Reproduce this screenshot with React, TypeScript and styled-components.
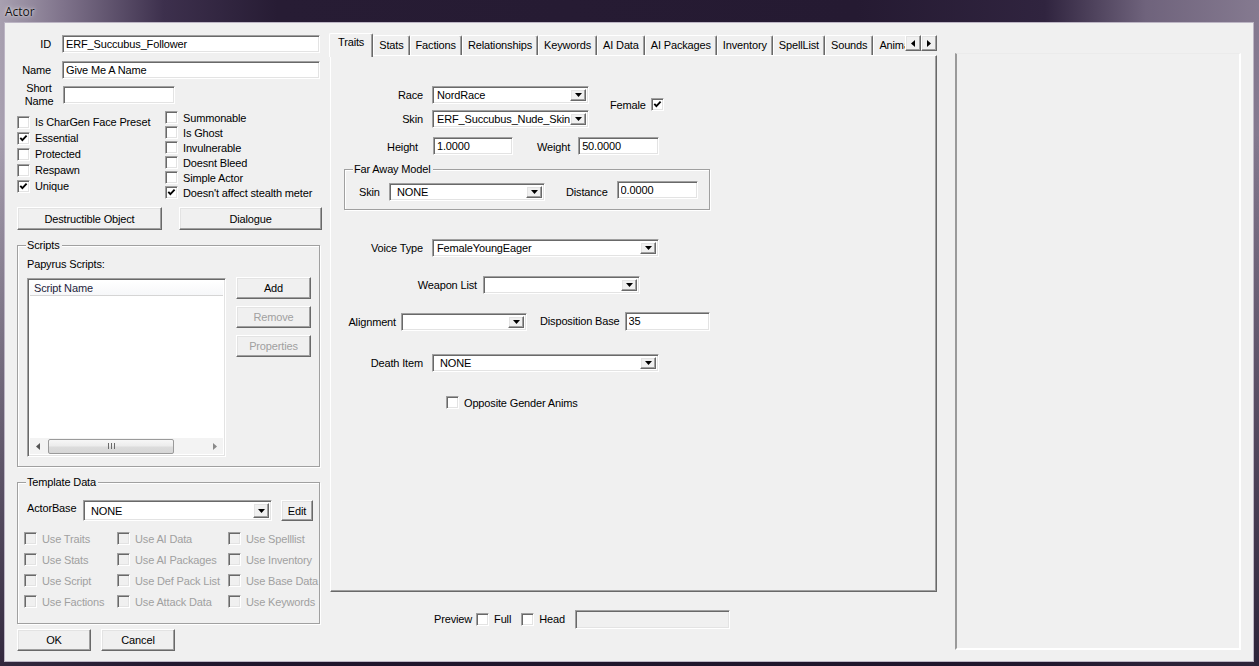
import React from "react";
import styled, { createGlobalStyle, css } from "styled-components";

const GlobalStyle = createGlobalStyle`
  html, body { margin: 0; padding: 0; background: #261b33; }
  body { font-family: "Liberation Sans", Arial, sans-serif; font-size: 11px; letter-spacing: -0.15px; color: #000; }
  * { box-sizing: border-box; }
`;

const FONT = `11px "Liberation Sans", Arial, sans-serif`;

/* classic 3D edges */
const sunken = css`
  border: 1px solid;
  border-color: #a0a0a0 #ffffff #ffffff #a0a0a0;
  box-shadow: inset 1px 1px 0 #696969, inset -1px -1px 0 #e3e3e3;
`;
const raised = css`
  border: 1px solid;
  border-color: #ffffff #696969 #696969 #ffffff;
  box-shadow: inset -1px -1px 0 #a0a0a0, inset 1px 1px 0 #e3e3e3;
  background: #f0f0f0;
`;

const Window = styled.div`
  width: 1259px;
  height: 666px;
  display: flex;
  flex-direction: column;
  overflow: hidden;
  background:
    linear-gradient(180deg, rgba(0, 0, 0, 0) 0%, rgba(0, 0, 0, 0) 20%, rgba(30, 20, 42, 0.85) 100%),
    linear-gradient(90deg, #a8a0b0 0%, #7f738b 5%, #3d304d 13%, #271c34 22%, #251a32 68%, #30243f 83%, #6f637c 91%, #857a90 100%);
`;

const TitleBar = styled.div`
  height: 22px;
  flex: none;
  display: flex;
  align-items: center;
  padding-left: 5px;
`;

const TitleText = styled.span`
  font: 12px "Open Sans", "Liberation Sans", sans-serif;
  letter-spacing: 0;
  color: #111;
  text-shadow: 0 0 5px rgba(255, 255, 255, 0.8), 0 0 2px rgba(255, 255, 255, 0.6);
`;

const Frame = styled.div`
  flex: 1;
  display: flex;
  padding: 0 5px 4px 4px;
  min-height: 0;
`;

const Client = styled.div`
  flex: 1;
  display: flex;
  align-items: flex-start;
  background: #f0f0f0;
  border: 1px solid #bcb5c4;
`;

/* ---------- generic controls ---------- */

const Column = styled.div<{ $w: number; $ml: number; $pt: number }>`
  width: ${(p) => p.$w}px;
  margin-left: ${(p) => p.$ml}px;
  padding-top: ${(p) => p.$pt}px;
  display: flex;
  flex-direction: column;
  flex: none;
`;

const Row = styled.div<{ $mt?: number; $pl?: number; $gap?: number; $h?: number; $align?: string }>`
  display: flex;
  align-items: ${(p) => p.$align ?? "center"};
  margin-top: ${(p) => p.$mt ?? 0}px;
  padding-left: ${(p) => p.$pl ?? 0}px;
  gap: ${(p) => p.$gap ?? 0}px;
  ${(p) => (p.$h ? `height: ${p.$h}px;` : "")}
  flex: none;
`;

const Label = styled.span<{ $w?: number; $align?: string; $dim?: boolean; $mt?: number }>`
  ${(p) => (p.$w ? `width: ${p.$w}px;` : "")}
  text-align: ${(p) => p.$align ?? "left"};
  white-space: nowrap;
  line-height: 13px;
  color: ${(p) => (p.$dim ? "#a0a0a0" : "#000")};
  margin-top: ${(p) => p.$mt ?? 0}px;
  flex: none;
`;

const TextBox = styled.input<{ $w: number; $h?: number; $disabled?: boolean }>`
  ${sunken};
  width: ${(p) => p.$w}px;
  height: ${(p) => p.$h ?? 18}px;
  margin: 0;
  padding: 0 0 0 3px;
  font: ${FONT};
  letter-spacing: -0.15px;
  color: #000;
  background: ${(p) => (p.$disabled ? "#f0f0f0" : "#ffffff")};
  outline: none;
  flex: none;
`;

const ComboFrame = styled.div<{ $w: number; $h?: number; $mt?: number; $ml?: number }>`
  ${sunken};
  width: ${(p) => p.$w}px;
  height: ${(p) => p.$h ?? 18}px;
  margin-top: ${(p) => p.$mt ?? 0}px;
  margin-left: ${(p) => p.$ml ?? 0}px;
  display: flex;
  align-items: stretch;
  padding: 1px;
  background: #ffffff;
  flex: none;
`;

const ComboText = styled.span<{ $pad: number }>`
  flex: 1;
  min-width: 0;
  overflow: hidden;
  white-space: nowrap;
  padding-left: ${(p) => p.$pad}px;
  display: flex;
  align-items: center;
`;

const DropButton = styled.span`
  ${raised};
  width: 16px;
  margin: 1px 1px 1px 0;
  display: flex;
  align-items: center;
  justify-content: center;
  flex: none;
`;

const DownArrow = () => (
  <svg width="7" height="4" viewBox="0 0 7 4">
    <polygon points="0,0 7,0 3.5,4" fill="#000" />
  </svg>
);

const Combo = ({
  w,
  h,
  mt,
  ml,
  text,
  pad = 3,
}: {
  w: number;
  h?: number;
  mt?: number;
  ml?: number;
  text?: string;
  pad?: number;
}) => (
  <ComboFrame $w={w} $h={h} $mt={mt} $ml={ml}>
    <ComboText $pad={pad}>{text}</ComboText>
    <DropButton>
      <DownArrow />
    </DropButton>
  </ComboFrame>
);

const Button = styled.button<{ $w: number; $h?: number; $disabled?: boolean; $mt?: number; $ml?: number }>`
  ${raised};
  width: ${(p) => p.$w}px;
  height: ${(p) => p.$h ?? 22}px;
  margin: ${(p) => p.$mt ?? 0}px 0 0 ${(p) => p.$ml ?? 0}px;
  padding: 0;
  font: ${FONT};
  letter-spacing: -0.15px;
  color: ${(p) => (p.$disabled ? "#a0a0a0" : "#000")};
  flex: none;
  cursor: default;
`;

const Box = styled.span<{ $disabled?: boolean }>`
  ${sunken};
  width: 13px;
  height: 13px;
  display: inline-flex;
  align-items: center;
  justify-content: center;
  background: ${(p) => (p.$disabled ? "#f0f0f0" : "#ffffff")};
  flex: none;
`;

const CheckMark = () => (
  <svg width="9" height="9" viewBox="0 0 9 9">
    <polyline points="1.3,3.8 3.4,6.2 7.6,1.6" fill="none" stroke="#000" strokeWidth="1.8" />
  </svg>
);

const CheckItem = styled.div<{ $h: number; $gap?: number; $dim?: boolean }>`
  height: ${(p) => p.$h}px;
  display: flex;
  align-items: center;
  gap: ${(p) => p.$gap ?? 5}px;
  white-space: nowrap;
  color: ${(p) => (p.$dim ? "#a0a0a0" : "#000")};
`;

const Check = ({ label, checked, h = 16, disabled }: { label: string; checked?: boolean; h?: number; disabled?: boolean }) => (
  <CheckItem $h={h} $dim={disabled}>
    <Box $disabled={disabled}>{checked && <CheckMark />}</Box>
    <span>{label}</span>
  </CheckItem>
);

const GroupBox = styled.div<{ $w: number; $h: number; $mt: number; $ml?: number; $pad: string }>`
  position: relative;
  width: ${(p) => p.$w}px;
  height: ${(p) => p.$h}px;
  margin-top: ${(p) => p.$mt}px;
  margin-left: ${(p) => p.$ml ?? 0}px;
  padding: ${(p) => p.$pad};
  border: 1px solid #a0a0a0;
  box-shadow: inset 1px 1px 0 #ffffff, 1px 1px 0 #ffffff;
  display: flex;
  flex-direction: column;
  flex: none;
`;

const GroupCaption = styled.span`
  position: absolute;
  top: -7px;
  left: 8px;
  padding: 0 2px 0 1px;
  line-height: 13px;
  background: #f0f0f0;
  white-space: nowrap;
`;

/* ---------- left column pieces ---------- */

const CheckColumns = styled.div`
  height: 92px;
  display: flex;
  align-items: flex-start;
  flex: none;
`;

const CheckStack = styled.div<{ $w?: number; $pt: number }>`
  ${(p) => (p.$w ? `width: ${p.$w}px;` : "")}
  padding-top: ${(p) => p.$pt}px;
  display: flex;
  flex-direction: column;
`;

const ListView = styled.div`
  ${sunken};
  width: 199px;
  height: 179px;
  padding: 2px;
  background: #ffffff;
  display: flex;
  flex-direction: column;
  flex: none;
`;

const ListHeader = styled.div`
  height: 15px;
  line-height: 14px;
  padding-left: 4px;
  color: #1e1e3c;
  background: linear-gradient(#ffffff, #f6f7f9);
  border-bottom: 1px solid #d5d5d5;
  flex: none;
`;

const ListBody = styled.div`
  flex: 1;
`;

const HScroll = styled.div`
  height: 16px;
  display: flex;
  align-items: center;
  background: #f3f3f3;
  flex: none;
`;

const ScrollArrow = styled.span`
  width: 16px;
  height: 16px;
  display: flex;
  align-items: center;
  justify-content: center;
  flex: none;
`;

const ScrollTrack = styled.div`
  flex: 1;
  height: 16px;
  display: flex;
  align-items: center;
`;

const ScrollThumb = styled.div`
  width: 126px;
  height: 15px;
  margin-left: 2px;
  border: 1px solid #9a9a9a;
  border-radius: 2px;
  background: linear-gradient(#f7f7f7, #ececec 45%, #dcdcdc 55%, #d6d6d6);
  display: flex;
  align-items: center;
  justify-content: center;
`;

const ButtonStack = styled.div`
  display: flex;
  flex-direction: column;
  gap: 7px;
  margin-left: 10px;
  margin-top: -1px;
`;

const TemplateGrid = styled.div`
  display: grid;
  grid-template-columns: 93px 111px auto;
  grid-auto-rows: 21px;
  margin-top: 7px;
`;

/* ---------- tab control ---------- */

const TabStrip = styled.div`
  display: flex;
  align-items: flex-start;
  height: 22px;
  flex: none;
`;

const TabList = styled.div`
  flex: 1;
  min-width: 0;
  height: 24px;
  margin-left: -1px;
  display: flex;
  align-items: flex-start;
  overflow: hidden;
  position: relative;
  z-index: 1;
`;

const Tab = styled.div<{ $active?: boolean }>`
  flex: none;
  white-space: nowrap;
  background: #f0f0f0;
  border-top: 1px solid #ffffff;
  border-left: 1px solid #ffffff;
  border-right: 1px solid #696969;
  box-shadow: inset -1px 0 0 #a0a0a0;
  border-radius: 2px 2px 0 0;
  ${(p) =>
    p.$active
      ? css`
          height: 24px;
          margin-top: 0;
          padding: 2px 8px 0 8px;
          line-height: 13px;
        `
      : css`
          height: 20px;
          margin-top: 2px;
          padding: 3px 5px 0 5px;
          line-height: 13px;
        `}
`;

const TabArrows = styled.div`
  display: flex;
  margin-top: 2px;
  flex: none;
`;

const ArrowButton = styled.span`
  ${raised};
  width: 16px;
  height: 16px;
  display: flex;
  align-items: center;
  justify-content: center;
`;

const TabPanel = styled.div`
  height: 537px;
  background: #f0f0f0;
  border: 1px solid;
  border-color: #ffffff #696969 #696969 #ffffff;
  box-shadow: inset -1px -1px 0 #a0a0a0;
  display: flex;
  flex-direction: column;
  flex: none;
`;

const RaceBlock = styled.div`
  display: flex;
  flex-direction: column;
  gap: 6px;
`;

const FemaleToggle = styled.div`
  display: flex;
  align-items: center;
  gap: 5px;
  margin: 12px 0 0 21px;
`;

const RenderView = styled.div`
  width: 286px;
  height: 597px;
  margin-left: 18px;
  margin-top: 30px;
  flex: none;
  border-left: 2px solid #9a9a9a;
  border-top: 1px solid #ebebeb;
  border-right: 2px solid #ffffff;
  border-bottom: 2px solid #ffffff;
  background: #f0f0f0;
`;

const tabs = [
  "Traits",
  "Stats",
  "Factions",
  "Relationships",
  "Keywords",
  "AI Data",
  "AI Packages",
  "Inventory",
  "SpellList",
  "Sounds",
  "Animation",
];

const templateFlags = [
  "Use Traits",
  "Use AI Data",
  "Use Spelllist",
  "Use Stats",
  "Use AI Packages",
  "Use Inventory",
  "Use Script",
  "Use Def Pack List",
  "Use Base Data",
  "Use Factions",
  "Use Attack Data",
  "Use Keywords",
];

export default function App() {
  return (
    <>
      <GlobalStyle />
      <Window>
        <TitleBar>
          <TitleText>Actor</TitleText>
        </TitleBar>
        <Frame>
          <Client>
            {/* left column: identity, flags, scripts, template */}
            <Column $w={305} $ml={12} $pt={12}>
              <Row $gap={11}>
                <Label $w={34} $align="right">ID</Label>
                <TextBox $w={258} readOnly defaultValue="ERF_Succubus_Follower" />
              </Row>
              <Row $mt={8} $gap={11}>
                <Label $w={34} $align="right">Name</Label>
                <TextBox $w={258} readOnly defaultValue="Give Me A Name" />
              </Row>
              <Row $mt={3} $gap={2} $h={26}>
                <Label $w={44} $align="center">
                  Short
                  <br />
                  Name
                </Label>
                <TextBox $w={112} readOnly defaultValue="" />
              </Row>
              <CheckColumns>
                <CheckStack $w={148} $pt={6}>
                  <Check label="Is CharGen Face Preset" />
                  <Check label="Essential" checked />
                  <Check label="Protected" />
                  <Check label="Respawn" />
                  <Check label="Unique" checked />
                </CheckStack>
                <CheckStack $pt={2}>
                  <Check h={15} label="Summonable" />
                  <Check h={15} label="Is Ghost" />
                  <Check h={15} label="Invulnerable" />
                  <Check h={15} label="Doesnt Bleed" />
                  <Check h={15} label="Simple Actor" />
                  <Check h={15} label="Doesn't affect stealth meter" checked />
                </CheckStack>
              </CheckColumns>
              <Row $mt={7} $gap={17}>
                <Button $w={145} $h={23}>Destructible Object</Button>
                <Button $w={143} $h={23}>Dialogue</Button>
              </Row>

              <GroupBox $w={303} $h={222} $mt={15} $pad="12px 9px 0 9px">
                <GroupCaption>Scripts</GroupCaption>
                <Label>Papyrus Scripts:</Label>
                <Row $mt={7} $align="flex-start">
                  <ListView>
                    <ListHeader>Script Name</ListHeader>
                    <ListBody />
                    <HScroll>
                      <ScrollArrow>
                        <svg width="4" height="7" viewBox="0 0 4 7">
                          <polygon points="4,0 4,7 0,3.5" fill="#555" />
                        </svg>
                      </ScrollArrow>
                      <ScrollTrack>
                        <ScrollThumb>
                          <svg width="7" height="6" viewBox="0 0 7 6">
                            <path d="M0.5 0v6M3.5 0v6M6.5 0v6" stroke="#6a6a6a" strokeWidth="1" />
                          </svg>
                        </ScrollThumb>
                      </ScrollTrack>
                      <ScrollArrow>
                        <svg width="4" height="7" viewBox="0 0 4 7">
                          <polygon points="0,0 0,7 4,3.5" fill="#8a8a8a" />
                        </svg>
                      </ScrollArrow>
                    </HScroll>
                  </ListView>
                  <ButtonStack>
                    <Button $w={75}>Add</Button>
                    <Button $w={75} $disabled>Remove</Button>
                    <Button $w={75} $disabled>Properties</Button>
                  </ButtonStack>
                </Row>
              </GroupBox>

              <GroupBox $w={303} $h={142} $mt={15} $pad="17px 6px 0 6px">
                <GroupCaption>Template Data</GroupCaption>
                <Row $pl={3} $align="flex-start">
                  <Label $w={56} $mt={2}>ActorBase</Label>
                  <Combo w={189} h={21} text="NONE" pad={6} />
                  <Button $w={32} $h={21} $ml={9}>Edit</Button>
                </Row>
                <TemplateGrid>
                  {templateFlags.map((f) => (
                    <Check key={f} h={21} label={f} disabled />
                  ))}
                </TemplateGrid>
              </GroupBox>

              <Row $mt={5} $gap={10}>
                <Button $w={74}>OK</Button>
                <Button $w={74}>Cancel</Button>
              </Row>
            </Column>

            {/* middle column: tabbed trait editor */}
            <Column $w={607} $ml={8} $pt={10}>
              <TabStrip>
                <TabList>
                  {tabs.map((t, i) => (
                    <Tab key={t} $active={i === 0}>
                      {t}
                    </Tab>
                  ))}
                </TabList>
                <TabArrows>
                  <ArrowButton>
                    <svg width="4" height="7" viewBox="0 0 4 7">
                      <polygon points="4,0 4,7 0,3.5" fill="#000" />
                    </svg>
                  </ArrowButton>
                  <ArrowButton>
                    <svg width="4" height="7" viewBox="0 0 4 7">
                      <polygon points="0,0 0,7 4,3.5" fill="#000" />
                    </svg>
                  </ArrowButton>
                </TabArrows>
              </TabStrip>
              <TabPanel>
                <Row $mt={30} $align="flex-start">
                  <RaceBlock>
                    <Row $gap={9}>
                      <Label $w={92} $align="right">Race</Label>
                      <Combo w={157} text="NordRace" />
                    </Row>
                    <Row $gap={9}>
                      <Label $w={92} $align="right">Skin</Label>
                      <Combo w={157} text="ERF_Succubus_Nude_Skin" />
                    </Row>
                  </RaceBlock>
                  <FemaleToggle>
                    <span>Female</span>
                    <Box>
                      <CheckMark />
                    </Box>
                  </FemaleToggle>
                </Row>
                <Row $mt={9}>
                  <Label $w={87} $align="right" $mt={2}>Height</Label>
                  <TextBox $w={80} readOnly defaultValue="1.0000" style={{ marginLeft: 15 }} />
                  <Label $mt={2} style={{ marginLeft: 24 }}>Weight</Label>
                  <TextBox $w={81} readOnly defaultValue="50.0000" style={{ marginLeft: 8 }} />
                </Row>
                <GroupBox $w={366} $h={41} $mt={14} $ml={13} $pad="11px 0 0 14px">
                  <GroupCaption>Far Away Model</GroupCaption>
                  <Row $align="flex-start">
                    <Label $w={22} $mt={5}>Skin</Label>
                    <Combo w={156} mt={2} ml={8} text="NONE" pad={6} />
                    <Label $mt={5} style={{ marginLeft: 21 }}>Distance</Label>
                    <TextBox $w={81} readOnly defaultValue="0.0000" style={{ marginLeft: 9 }} />
                  </Row>
                </GroupBox>
                <Row $mt={29} $gap={9}>
                  <Label $w={92} $align="right">Voice Type</Label>
                  <Combo w={227} text="FemaleYoungEager" />
                </Row>
                <Row $mt={19} $gap={6}>
                  <Label $w={146} $align="right">Weapon List</Label>
                  <Combo w={157} />
                </Row>
                <Row $mt={17} $h={20}>
                  <Label $w={65} $align="right" $mt={2}>Alignment</Label>
                  <Combo w={126} mt={2} ml={5} />
                  <Label style={{ marginLeft: 13 }}>Disposition Base</Label>
                  <TextBox $w={85} $h={19} readOnly defaultValue="35" style={{ marginLeft: 5 }} />
                </Row>
                <Row $mt={23} $gap={9}>
                  <Label $w={92} $align="right">Death Item</Label>
                  <Combo w={227} text="NONE" pad={6} />
                </Row>
                <Row $mt={24} $pl={115}>
                  <Check h={13} label="Opposite Gender Anims" />
                </Row>
              </TabPanel>
              <Row $mt={18} $pl={104} $h={19}>
                <Label>Preview</Label>
                <Box style={{ marginLeft: 4 }} />
                <Label style={{ marginLeft: 5 }}>Full</Label>
                <Box style={{ marginLeft: 10 }} />
                <Label style={{ marginLeft: 5 }}>Head</Label>
                <TextBox $w={155} $h={19} $disabled readOnly defaultValue="" style={{ marginLeft: 10 }} />
              </Row>
            </Column>

            {/* right column: model render view */}
            <RenderView />
          </Client>
        </Frame>
      </Window>
    </>
  );
}
